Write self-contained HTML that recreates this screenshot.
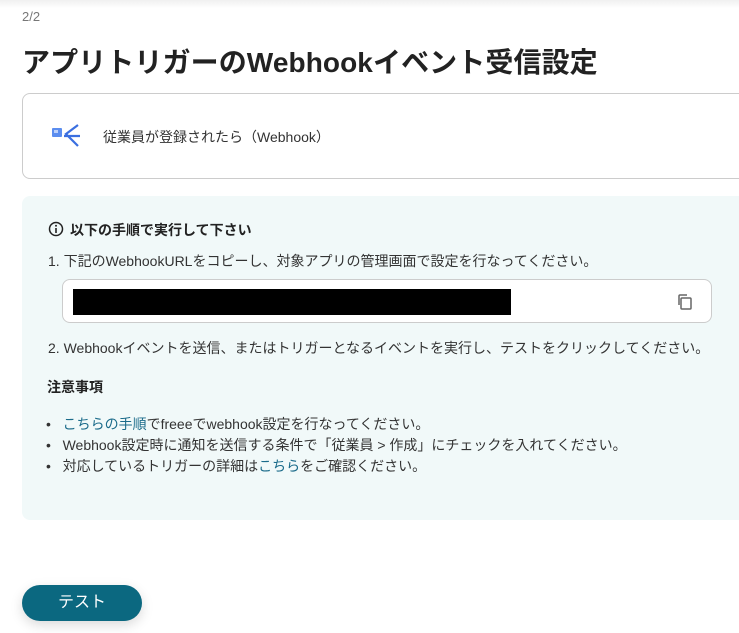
<!DOCTYPE html>
<html><head><meta charset="utf-8"><style>
body{margin:0;width:739px;height:633px;overflow:hidden;background:#fff;font-family:"Liberation Sans","Noto Sans CJK JP",sans-serif;color:#333;position:relative}
.a{position:absolute}
</style></head><body>
<div class="a" style="left:0;top:0;width:739px;height:8px;background:linear-gradient(#f0f0f0,#fff)"></div>
<div class="a" style="left:22px;top:9px;font-size:13px;color:#777">2/2</div>
<div class="a" style="left:22px;top:41px;font-size:28px;font-weight:bold;color:#222;letter-spacing:0.1px">アプリトリガーのWebhookイベント受信設定</div>
<div class="a" style="left:22px;top:93px;width:730px;height:84px;border:1px solid #ccc;border-radius:8px"></div>
<svg class="a" style="left:50px;top:124px" width="32" height="24" viewBox="0 0 32 24"><rect x="2" y="4" width="10" height="9" fill="#5b8def" rx="1"/><rect x="4" y="6" width="4" height="3" fill="#bcd0fa"/><path d="M28 1 L16 10 L28 22 M14 12 L30 12" stroke="#3b6fe0" stroke-width="2.2" fill="none"/></svg>
<div class="a" style="left:103px;top:127px;font-size:14px">従業員が登録されたら（Webhook）</div>
<div class="a" style="left:22px;top:196px;width:730px;height:324px;background:#f1f9f9;border-radius:8px"></div>
<svg class="a" style="left:48px;top:221px" width="16" height="16"><circle cx="8" cy="8" r="6.5" stroke="#222" stroke-width="1.5" fill="none"/><rect x="7.2" y="7" width="1.6" height="5" fill="#222"/><circle cx="8" cy="4.8" r="1" fill="#222"/></svg>
<div class="a" style="left:70px;top:220px;font-size:14px;font-weight:bold;color:#222">以下の手順で実行して下さい</div>
<div class="a" style="left:48px;top:251px;font-size:14px">1. 下記のWebhookURLをコピーし、対象アプリの管理画面で設定を行なってください。</div>
<div class="a" style="left:62px;top:279px;width:648px;height:42px;background:#fff;border:1px solid #ccc;border-radius:8px"></div>
<div class="a" style="left:73px;top:289px;width:438px;height:26px;background:#000"></div>
<svg class="a" style="left:676px;top:293px" width="18" height="18"><rect x="5" y="5" width="10" height="11" fill="none" stroke="#666" stroke-width="1.5" rx="1"/><path d="M3 12 V3 a1 1 0 0 1 1-1 H11" fill="none" stroke="#666" stroke-width="1.5"/></svg>
<div class="a" style="left:48px;top:338px;font-size:14px">2. Webhookイベントを送信、またはトリガーとなるイベントを実行し、テストをクリックしてください。</div>
<div class="a" style="left:47px;top:377px;font-size:14px;font-weight:bold;color:#222">注意事項</div>
<div class="a" style="left:46px;top:414px;font-size:14px;line-height:21px">
<div>•&nbsp;&nbsp;&nbsp;<span style="color:#1b6b8a">こちらの手順</span>でfreeeでwebhook設定を行なってください。</div>
<div>•&nbsp;&nbsp;&nbsp;Webhook設定時に通知を送信する条件で「従業員 &gt; 作成」にチェックを入れてください。</div>
<div>•&nbsp;&nbsp;&nbsp;対応しているトリガーの詳細は<span style="color:#1b6b8a">こちら</span>をご確認ください。</div>
</div>
<div class="a" style="left:22px;top:585px;width:120px;height:36px;background:#0b6880;border-radius:18px;color:#fff;font-size:16px;text-align:center;line-height:36px;box-shadow:0 4px 12px rgba(0,0,0,0.15)">テスト</div>
</body></html>
